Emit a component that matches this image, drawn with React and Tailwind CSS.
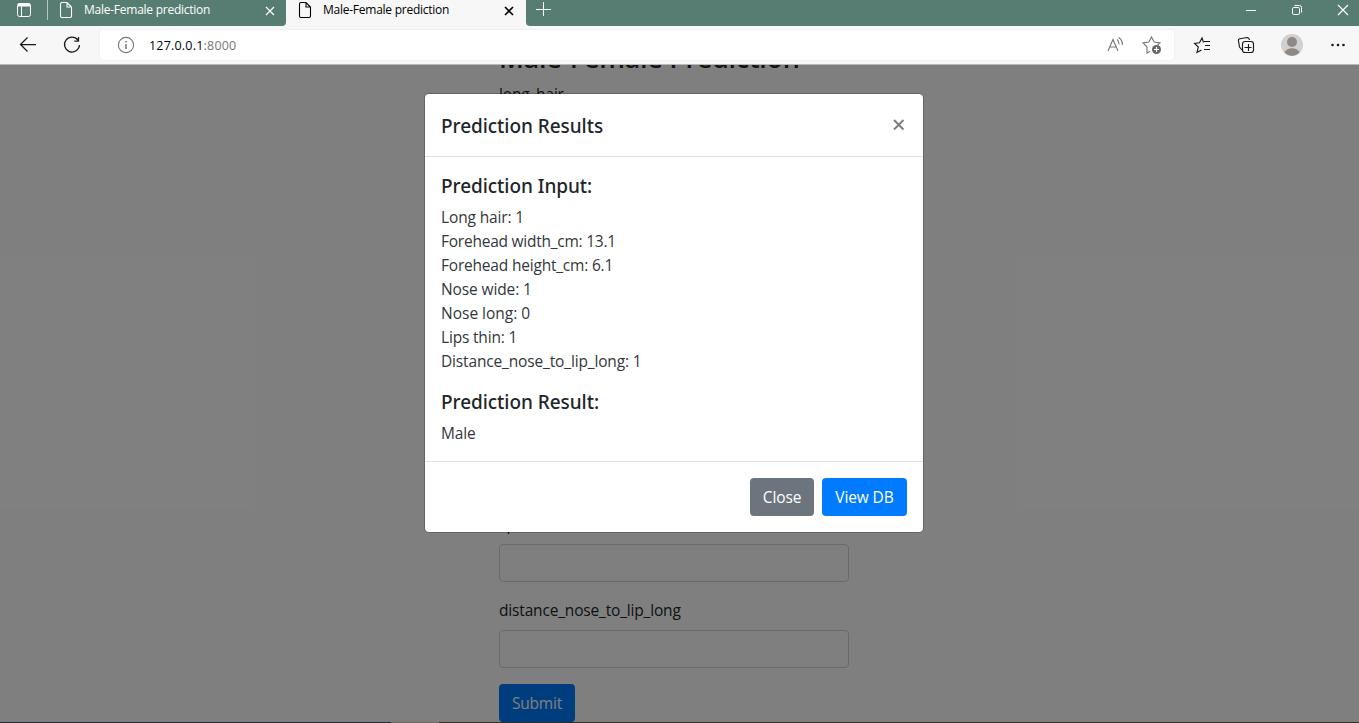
import React from "react";

const results = [
  ["Long hair: 1", "tracking-[-0.14px]"],
  ["Forehead width_cm: 13.1", "tracking-[-0.24px]"],
  ["Forehead height_cm: 6.1", "tracking-[-0.2px]"],
  ["Nose wide: 1", "tracking-[-0.12px]"],
  ["Nose long: 0", "tracking-[0px]"],
  ["Lips thin: 1", "tracking-[-0.18px]"],
  ["Distance_nose_to_lip_long: 1", "tracking-[-0.15px]"],
];

function PageIcon() {
  return (
    <svg width="14" height="18" viewBox="0 0 14 18" fill="none" stroke="currentColor" strokeWidth="1.1" className="shrink-0">
      <path d="M3 1.5H8L12.5 6V15Q12.5 16.5 11 16.5H3Q1.5 16.5 1.5 15V3Q1.5 1.5 3 1.5ZM8 1.5V6H12.5" />
    </svg>
  );
}

function TabClose({ heavy }) {
  return (
    <svg width="10" height="10" viewBox="0 0 10 10" fill="none" stroke="currentColor" strokeWidth={heavy ? 1.6 : 1.2} className="shrink-0">
      <path d="M1 1L9 9M9 1L1 9" />
    </svg>
  );
}

function TabStrip() {
  return (
    <div className="flex h-[26px] bg-[#f7f7f7] text-white">
      <div className="flex h-[26px] w-[286px] rounded-br bg-[#577d72] pl-4">
        <svg width="16" height="20" viewBox="0 0 16 20" fill="none" stroke="currentColor" className="shrink-0">
          <rect x="1.5" y="3.5" width="13" height="13" rx="2" />
          <path d="M2 5H14" strokeWidth="3" />
          <path d="M5.5 6.5V16" />
        </svg>
        <div className="ml-[15px] h-[20px] w-px bg-[#b5c5c0]" />
        <div className="ml-[11px] mt-px"><PageIcon /></div>
        <span className="ml-[11px] w-[181px] whitespace-nowrap text-[12px] leading-[20px] tracking-[-0.25px]">Male-Female prediction</span>
        <div className="mt-[5.5px]"><TabClose /></div>
      </div>
      <div className="flex w-[240px] pl-[12px] text-black">
        <div className="mt-px"><PageIcon /></div>
        <span className="ml-[11px] w-[181px] whitespace-nowrap text-[12px] leading-[20px] tracking-[-0.25px]">Male-Female prediction</span>
        <div className="mt-[5.5px]"><TabClose heavy /></div>
      </div>
      <div className="flex flex-1 rounded-bl bg-[#577d72] pl-[10px]">
        <svg width="15" height="20" viewBox="0 0 15 20" fill="none" stroke="currentColor">
          <path d="M0 9.5H15M7.5 2V16" />
        </svg>
        <div className="flex-1" />
        <svg width="120" height="22" viewBox="0 0 120 22" fill="none" stroke="currentColor">
          <path d="M7 10.5H17" />
          <rect x="53.5" y="7.5" width="7" height="7" rx="1.3" />
          <path d="M55.5 5.5H60.5Q62.5 5.5 62.5 7.5V12.5" />
          <path d="M99 5L109 15M109 5L99 15" strokeWidth="1.1" />
        </svg>
      </div>
    </div>
  );
}

function Toolbar() {
  return (
    <div className="flex h-[39px] border-b border-[#b9b9b9] bg-[#f7f7f7]">
      <svg width="99" height="38" viewBox="0 0 99 38" fill="none" stroke="#1b1b1b" strokeWidth="1.25" className="shrink-0">
        <path d="M36 18.5H20.5M27.5 11.5L20.5 18.5L27.5 25.5" />
        <path d="M78 14A7.5 7.5 0 1 0 79.5 19M78.5 11V15.2H74.3" />
      </svg>
      <div className="mt-[3px] flex h-[32px] w-[1076px] rounded border border-[#f2f2f2] bg-white">
        <svg width="49" height="30" viewBox="0 0 49 30" fill="none" stroke="#767676" className="shrink-0">
          <circle cx="26" cy="15" r="7.6" strokeWidth="1.1" />
          <path d="M26 14V19M26 11V12.5" strokeWidth="1.5" />
        </svg>
        <span className="mt-[5px] text-[12.5px] leading-[21px] tracking-[0.2px] text-[#777]">
          <span className="text-black">127.0.0.1</span>:8000
        </span>
        <div className="flex-1" />
        <svg width="74" height="30" viewBox="0 0 74 30" fill="none" stroke="#767676" strokeWidth="1.1" className="shrink-0">
          <path d="M8 21L13 9.5L18 21M9.8 17H16.2" />
          <path d="M17 9.5Q19.3 11.3 19 14.5M18.5 7.5Q22.8 10 22.3 15" />
          <path d="M50 21.2L47 23V16.8L43 12.9L48.8 12L51.5 7L54.2 12L60 12.9L57.5 15" />
          <circle cx="56.5" cy="19.5" r="4.5" fill="#666" stroke="none" />
          <path d="M54 19.5H59M56.5 17V22" stroke="white" />
        </svg>
      </div>
      <svg width="184" height="38" viewBox="1175 26 184 38" fill="none" stroke="#1b1b1b" strokeWidth="1.15" className="shrink-0">
        <path d="M1203.5 42.5L1202 38L1199.5 42.7L1194.5 43.5L1198.3 47L1197 52.3L1201.5 50M1204 41.5H1210M1205 45.5H1210M1204 49.5H1210" />
        <path d="M1242 50L1239.5 47L1238.5 41Q1238 39 1240 38.7L1247 37.5Q1249 37.5 1249.5 40" />
        <rect x="1242.5" y="41.5" width="11" height="11" rx="2.5" />
        <path d="M1244.5 47.5H1251.5M1248.5 44V51" />
        <circle cx="1292" cy="45" r="11" fill="#d2d0ce" stroke="none" />
        <circle cx="1292" cy="42" r="5" fill="#8e8984" stroke="none" />
        <path d="M1284.5 52.8Q1286 48.2 1292 48.2T1299.5 52.8Q1292 59.2 1284.5 52.8Z" fill="#8e8984" stroke="none" />
        <g fill="#1b1b1b" stroke="none">
          <circle cx="1332.5" cy="45" r="1.3" />
          <circle cx="1338" cy="45" r="1.3" />
          <circle cx="1343.5" cy="45" r="1.3" />
        </g>
      </svg>
    </div>
  );
}

function Field({ label }) {
  return (
    <div className="mb-4">
      <div className="mb-2 whitespace-nowrap text-[15.5px] leading-6 tracking-[-0.17px]">{label}</div>
      <div className="h-[38px] rounded border border-[#ced4da] bg-white" />
    </div>
  );
}

function Heading({ children }) {
  return (
    <h5 className="mb-2 h-6 font-['Noto_Sans','Open_Sans',sans-serif] text-[19px] font-medium leading-[26px] tracking-[-0.05px]">
      {children}
    </h5>
  );
}

function Modal() {
  return (
    <div className="absolute inset-0 flex items-start bg-black/50 pl-[424px] pt-[28px]">
      <div className="w-[500px] rounded-[5px] border border-black/20 bg-white bg-clip-padding">
        <div className="flex h-[63px] justify-between border-b border-[#dee2e6] px-4 pt-[19px]">
          <Heading>Prediction Results</Heading>
          <svg width="13" height="13" viewBox="0 0 13 13" stroke="#7f7f7f" strokeWidth="2" className="mr-[2px] mt-[5px]">
            <path d="M2 2L11.5 11.5M11.5 2L2 11.5" />
          </svg>
        </div>
        <div className="p-4">
          <Heading>Prediction Input:</Heading>
          <div className="mb-4 text-[15.5px] leading-6 text-[#33373b]">
            {results.map(([text, tracking]) => (
              <div key={text} className={tracking}>{text}</div>
            ))}
          </div>
          <Heading>Prediction Result:</Heading>
          <p className="text-[15.5px] leading-6 tracking-[-0.12px] text-[#33373b]">Male</p>
        </div>
        <div className="flex justify-end gap-2 border-t border-[#dee2e6] p-4 text-[15.5px] leading-[38px] text-white">
          <button className="h-[38px] w-[64px] rounded bg-[#6c757d] tracking-[-0.12px]">Close</button>
          <button className="h-[38px] w-[85px] rounded bg-[#007bff] tracking-[-0.12px]">View DB</button>
        </div>
      </div>
    </div>
  );
}

export default function App() {
  return (
    <div className="flex h-[723px] w-[1359px] flex-col overflow-hidden bg-white font-['Open_Sans','Noto_Sans',sans-serif] text-[#212529]">
      <TabStrip />
      <Toolbar />
      <div className="relative h-[657px] overflow-hidden bg-white">
        <div className="-mt-[29px] ml-[499px] w-[350px]">
          <h2 className="mb-2 h-[38px] whitespace-nowrap text-[27px] font-semibold leading-[43px] tracking-[-0.3px]">Male-Female Prediction</h2>
          <Field label="long_hair" />
          <div className="h-[344px]" />
          <Field label="lips_thin" />
          <Field label="distance_nose_to_lip_long" />
          <div className="h-[38px] w-[76px] rounded bg-[#007bff] text-center text-[15.5px] leading-[38px] tracking-[-0.2px] text-white">Submit</div>
        </div>
        <Modal />
      </div>
      <div className="flex h-px bg-[#25292c]">
        <div className="w-[391px] bg-[#22282b]" />
        <div className="w-[48px] bg-[#696664]" />
        <div className="flex-1 bg-[#352e28]" />
      </div>
    </div>
  );
}
